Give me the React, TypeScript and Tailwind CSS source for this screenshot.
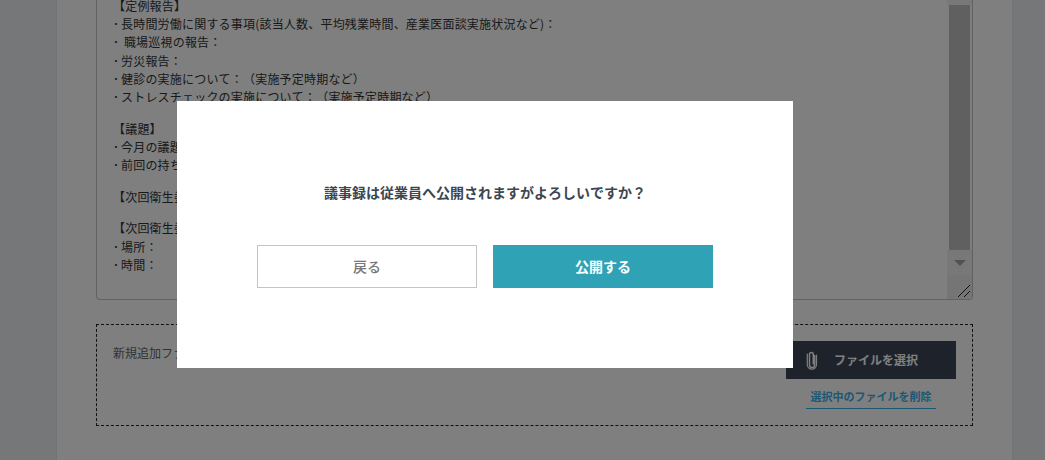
const FONT = '"Noto Sans CJK JP", "Liberation Sans", sans-serif';

const LINES = [
  '【定例報告】',
  '･長時間労働に関する事項(該当人数、平均残業時間、産業医面談実施状況など)：',
  '･ 職場巡視の報告：',
  '･労災報告：',
  '･健診の実施について：（実施予定時期など）',
  '･ストレスチェックの実施について：（実施予定時期など）',
  '',
  '【議題】',
  '･今月の議題：',
  '･前回の持ち越し事項：',
  '',
  '【次回衛生委員会の議題】',
  '',
  '【次回衛生委員会の日程】',
  '･場所：',
  '･時間：',
];

function Scrollbar() {
  return (
    <div className="flex w-[25px] shrink-0 flex-col self-stretch bg-[#fdfdfd]">
      <div className="h-[5px] bg-[#f0f0f0]" />
      <div className="mx-[2px] h-[245px] bg-[#c0c0c0]" />
      <div className="flex h-[25px] items-center justify-center bg-[#f0f0f0]">
        <div className="h-0 w-0 border-x-[6px] border-t-[6px] border-x-transparent border-t-[#a3a3a3]" />
      </div>
      <div className="relative flex-1 bg-[#eaeaea]">
        <svg className="absolute bottom-[1px] right-[1px]" width="14" height="14" viewBox="0 0 14 14">
          <path d="M1 13 L13 1 M7 13 L13 7" stroke="#222" strokeWidth="1" fill="none" />
        </svg>
      </div>
    </div>
  );
}

function ClipIcon() {
  return (
    <svg className="mr-[16px] shrink-0" width="12" height="20" viewBox="0 0 12 20" fill="none">
      <path
        d="M8.5 5 V14.5 A2.6 2.6 0 0 1 3.3 14.5 V4 A1.9 1.9 0 0 1 7.1 4 V13.5"
        stroke="#ffffff"
        strokeWidth="1.5"
        strokeLinecap="round"
        transform="translate(0.2 0.5)"
      />
      <path d="M10.5 5 V14.5 A4.6 4.6 0 0 1 1.3 14.5 V4" stroke="#ffffff" strokeWidth="1.2" strokeLinecap="round" />
    </svg>
  );
}

export default function App() {
  return (
    <div
      className="relative h-[460px] overflow-hidden bg-[#eceef2] [font-kerning:none] [text-spacing-trim:space-all]"
      style={{ fontFamily: FONT }}
    >
      <div className="ml-[56px] mr-[32px] h-[460px] border-x border-[#e6e6e6] bg-white pl-[39px] pr-[39px]">
        <div className="flex h-[300px] overflow-hidden rounded-b-[4px] border-x border-b border-[#c4c4c4] bg-white">
          <div className="min-w-0 flex-1 pl-[16px] text-[12px] tracking-[0.2px] text-[#333]">
            <div className="-mt-[3px]">
              {LINES.map((line, i) =>
                line ? (
                  <div key={i} className="h-[18.2px] whitespace-pre leading-[18.2px]">
                    {line.startsWith('･') ? (
                      <>
                        <span className="inline-block w-[8px]">･</span>
                        {line.slice(1)}
                      </>
                    ) : (
                      line
                    )}
                  </div>
                ) : (
                  <div key={i} className="h-[13.5px]" />
                ),
              )}
            </div>
          </div>
          <Scrollbar />
        </div>

        <div className="mt-[24px] flex h-[102px] justify-between border border-dashed border-[#222] pl-[16px] pr-[16px] pt-[16px]">
          <div className="pt-[3px] text-[12px] leading-[18px] text-[#666]">新規追加ファイル</div>
          <div className="flex w-[170px] flex-col items-center">
            <button className="flex h-[38px] w-full items-center bg-[#3c4656] pl-[20px] text-[12px] font-bold text-white">
              <ClipIcon />
              ファイルを選択
            </button>
            <a className="mt-[8px] w-[130px] whitespace-nowrap border-b border-[#38b0e6] pb-[3px] text-center text-[11px] font-bold leading-[18px] text-[#38b0e6]">
              選択中のファイルを削除
            </a>
          </div>
        </div>
      </div>

      <div className="absolute inset-0 bg-black/50 pl-[177px] pt-[101px]">
        <div className="flex h-[267px] w-[616px] flex-col items-center bg-white pl-[80px] pr-[80px]">
          <p className="mt-[80px] w-full text-center text-[14px] font-bold leading-[22px] text-[#3c4650]">
            議事録は従業員へ公開されますがよろしいですか？
          </p>
          <div className="mt-[42px] flex w-full gap-[16px]">
            <button className="h-[43px] w-[220px] border border-[#c4c4c4] bg-white text-[14px] font-medium text-[#777]">
              戻る
            </button>
            <button className="h-[43px] w-[220px] bg-[#30a2b5] text-[14px] font-bold text-white">公開する</button>
          </div>
        </div>
      </div>
    </div>
  );
}
